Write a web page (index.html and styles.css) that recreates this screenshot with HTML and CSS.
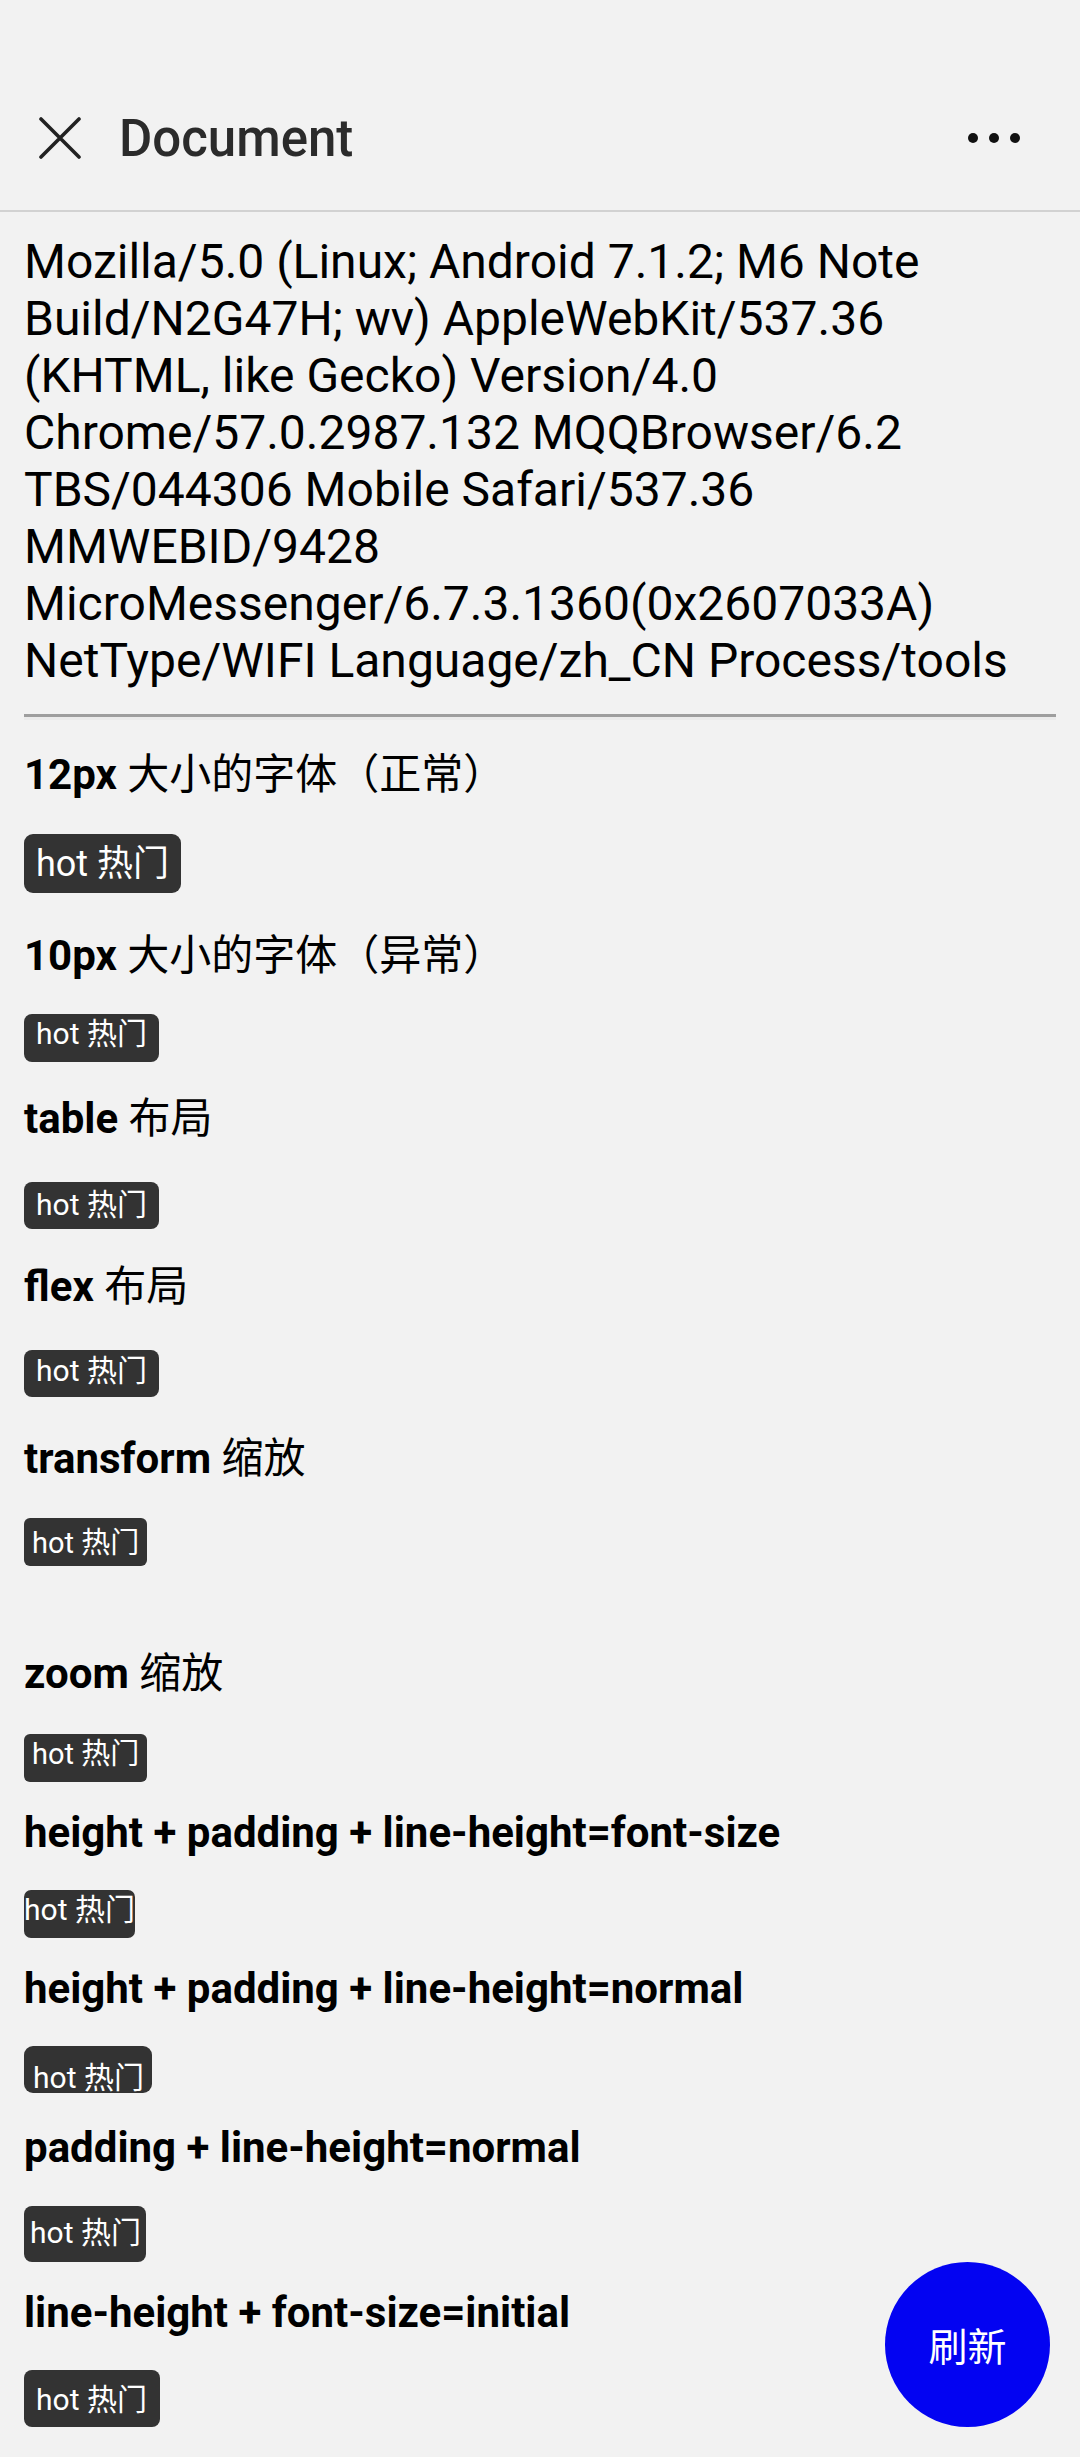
FILE: index.html
```html
<!DOCTYPE html>
<html lang="zh-CN">
<head>
<meta charset="utf-8">
<title>Document</title>
<link rel="stylesheet" href="styles.css">
</head>
<body>
<header class="appbar">
  <div class="appbar-row">
    <svg class="icon-close" viewBox="0 0 42 42" aria-hidden="true"><path d="M2 2 L40 40 M40 2 L2 40" fill="none" stroke="#222" stroke-width="3.6" stroke-linecap="round"/></svg>
    <h1 class="appbar-title">Document</h1>
    <svg class="icon-more" viewBox="0 0 52 12" aria-hidden="true"><circle cx="5" cy="6" r="5"/><circle cx="26" cy="6" r="5"/><circle cx="47" cy="6" r="5"/></svg>
  </div>
</header>
<main class="content">
  <p class="ua">Mozilla/5.0 (Linux; Android 7.1.2; M6 Note Build/N2G47H; wv) AppleWebKit/537.36 (KHTML, like Gecko) Version/4.0 Chrome/57.0.2987.132 MQQBrowser/6.2 TBS/044306 Mobile Safari/537.36 MMWEBID/9428 MicroMessenger/6.7.3.1360(0x2607033A) NetType/WIFI Language/zh_CN Process/tools</p>
  <hr class="rule">

  <section class="case case--1">
    <h2 class="case-title">12px <span class="cjk">大小的字体（正常）</span></h2>
    <span class="tag tag--1">hot 热门</span>
  </section>
  <section class="case case--2">
    <h2 class="case-title">10px <span class="cjk">大小的字体（异常）</span></h2>
    <span class="tag tag--2">hot 热门</span>
  </section>
  <section class="case case--3">
    <h2 class="case-title">table <span class="cjk">布局</span></h2>
    <span class="tag tag--3">hot 热门</span>
  </section>
  <section class="case case--4">
    <h2 class="case-title">flex <span class="cjk">布局</span></h2>
    <span class="tag tag--4">hot 热门</span>
  </section>
  <section class="case case--5">
    <h2 class="case-title">transform <span class="cjk">缩放</span></h2>
    <span class="tag tag--5">hot 热门</span>
  </section>
  <section class="case case--6">
    <h2 class="case-title">zoom <span class="cjk">缩放</span></h2>
    <span class="tag tag--6">hot 热门</span>
  </section>
  <section class="case case--7">
    <h2 class="case-title">height + padding + line-height=font-size</h2>
    <span class="tag tag--7">hot 热门</span>
  </section>
  <section class="case case--8">
    <h2 class="case-title">height + padding + line-height=normal</h2>
    <span class="tag tag--8">hot 热门</span>
  </section>
  <section class="case case--9">
    <h2 class="case-title">padding + line-height=normal</h2>
    <span class="tag tag--9">hot 热门</span>
  </section>
  <section class="case case--10">
    <h2 class="case-title">line-height + font-size=initial</h2>
    <span class="tag tag--10">hot 热门</span>
  </section>
</main>
<button class="fab" type="button">刷新</button>
</body>
</html>
```
FILE: styles.css
```css
html, body {
  margin: 0;
  padding: 0;
  background: #f2f2f2;
}

body {
  font-family: Roboto, "Noto Sans CJK SC", sans-serif;
  color: #000;
}

/* ---------- app bar ---------- */
.appbar {
  box-sizing: border-box;
  height: 212px;
  padding-top: 96px;
  border-bottom: 2px solid #d2d2d2;
}

.appbar-row {
  height: 84px;
  display: flex;
  align-items: center;
  padding: 0 60px 0 39px;
}

.icon-close {
  width: 42px;
  height: 42px;
  flex: none;
}

.appbar-title {
  margin: 0 0 0 38px;
  font-size: 51px;
  line-height: 51px;
  font-weight: 500;
  color: #2b2b2b;
  flex: 1;
}

.icon-more {
  width: 52px;
  height: 12px;
  fill: #111;
  flex: none;
}

/* ---------- content ---------- */
.content {
  padding: 0 24px;
}

.ua {
  margin: 21px 0 0;
  font-size: 48px;
  line-height: 57px;
  color: #000;
}

.rule {
  margin: 25px 0 0;
  height: 0;
  border: 0;
  border-top: 3px solid #9e9e9e;
  border-bottom: 3px solid #ebebeb;
}

.case {
  display: flex;
  flex-direction: column;
  align-items: flex-start;
}

.case-title {
  margin: 0 0 34px;
  font-size: 42px;
  line-height: 50px;
  font-weight: 700;
  color: #000;
  white-space: nowrap;
}

.cjk {
  font-weight: 400;
}

.case--1 { margin-top: 30px; }
.case--2 { margin-top: 38px; }
.case--3 { margin-top: 32px; }
.case--4 { margin-top: 33px; }
.case--5 { margin-top: 37px; }
.case--6 { margin-top: 83px; }
.case--7 { margin-top: 26px; }
.case--8 { margin-top: 26px; }
.case--9 { margin-top: 30px; }
.case--10 { margin-top: 26px; }

.case--2 .case-title { margin-bottom: 33px; }
.case--3 .case-title,
.case--4 .case-title { margin-bottom: 38px; }
.case--6 .case-title { margin-bottom: 35px; }
.case--7 .case-title,
.case--8 .case-title,
.case--10 .case-title { margin-bottom: 32px; }
.case--9 .case-title { margin-bottom: 33px; }

/* ---------- tags ---------- */
.tag {
  display: block;
  box-sizing: border-box;
  background: #333;
  color: #fff;
  font-size: 30px;
  line-height: 35px;
  border-radius: 8px;
  white-space: nowrap;
}

.tag--1 { font-size: 36px; line-height: 42px; padding: 9px 12px 8px; border-radius: 9px; }
.tag--2 { padding: 2px 12px 11px; }
.tag--3 { padding: 5px 12px 7px; }
.tag--4 { padding: 3px 12px 9px; }
.tag--5 { font-size: 29px; line-height: 34px; padding: 8px 8px 6px; border-radius: 6px; }
.tag--6 { font-size: 29px; line-height: 34px; padding: 3px 8px 11px; border-radius: 6px; }
.tag--7 { padding: 2px 0 11px; border-radius: 7px; }
.tag--8 { height: 47px; line-height: 31px; padding: 16px 8px 0 9px; border-radius: 9px; }
.tag--9 { padding: 9px 5px 12px 6px; }
.tag--10 { padding: 12px 13px 10px 12px; }

/* ---------- floating button ---------- */
.fab {
  position: fixed;
  right: 30px;
  bottom: 30px;
  width: 165px;
  height: 165px;
  border: 0;
  border-radius: 50%;
  background: #0303f2;
  color: #fff;
  font-family: "Noto Sans CJK SC", sans-serif;
  font-size: 39px;
  line-height: 1;
  padding: 0;
}
```
